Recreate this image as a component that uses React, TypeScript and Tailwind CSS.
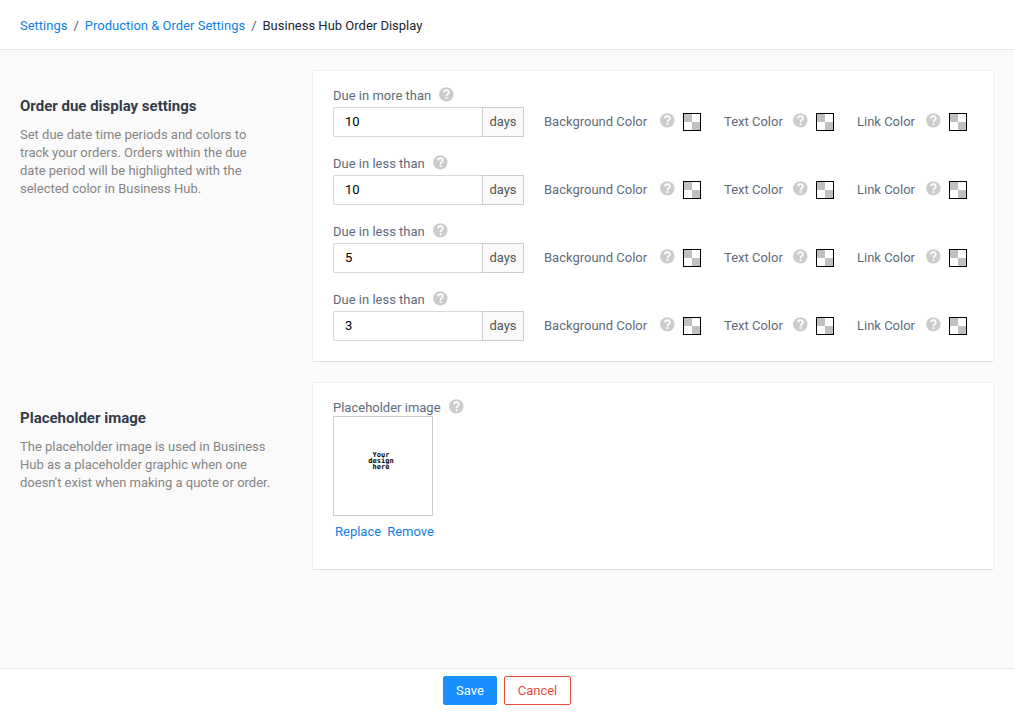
import { useState } from "react";
import type { ReactNode } from "react";

const dueRows = [
  { id: "more", label: "Due in more than", days: "10" },
  { id: "less-first", label: "Due in less than", days: "10" },
  { id: "less-second", label: "Due in less than", days: "5" },
  { id: "less-third", label: "Due in less than", days: "3" },
];

const colorFields = [
  { key: "background", label: "Background Color", width: "w-[108px]" },
  { key: "text", label: "Text Color", width: "w-[61px]" },
  { key: "link", label: "Link Color", width: "w-[61px]" },
];

function HelpIcon() {
  return (
    <svg viewBox="0 0 15 15" aria-hidden="true" className="mb-[3px] size-[15px] shrink-0">
      <circle cx="7.3" cy="7.4" r="7.2" fill="#cccccc" />
      <path
        d="M5 5.6C5 4.1 6 3.2 7.4 3.2S9.8 4.1 9.8 5.4C9.8 7 7.5 7.2 7.5 9.2"
        fill="none"
        stroke="#ffffff"
        strokeWidth="1.7"
      />
      <rect x="6.6" y="10.2" width="1.8" height="1.8" fill="#ffffff" />
    </svg>
  );
}

function ColorField({ id, label, width }: { id: string; label: string; width: string }) {
  return (
    <div className="flex items-center gap-2">
      <label htmlFor={id} className={`${width} whitespace-nowrap text-[#5f6b7a]`}>
        {label}
      </label>
      <HelpIcon />
      <button
        id={id}
        type="button"
        className="grid size-[18px] shrink-0 cursor-pointer grid-cols-2 grid-rows-2 border border-black bg-white"
      >
        <span className="bg-[#bfbfbf]" />
        <span />
        <span />
        <span className="bg-[#bfbfbf]" />
      </button>
    </div>
  );
}

function DueRow({ id, label, days }: { id: string; label: string; days: string }) {
  const [value, setValue] = useState(days);
  return (
    <div className="flex flex-col gap-[3px]">
      <div className="flex h-[17px] items-center gap-2">
        <label htmlFor={id} className="text-[#5f6b7a]">
          {label}
        </label>
        <HelpIcon />
      </div>
      <div className="flex items-center gap-5">
        <div className="flex h-[30px] w-[191px] shrink-0">
          <input
            id={id}
            type="text"
            value={value}
            onChange={(e) => setValue(e.target.value)}
            className="min-w-0 flex-1 rounded-l-xs border border-r-0 border-[#d9d9d9] bg-white px-[11px] text-black outline-none"
          />
          <span className="flex w-[42px] items-center justify-center border border-[#cccccc] bg-[#fafafa] text-[#555555]">
            days
          </span>
        </div>
        <div className="flex items-center gap-[23px]">
          {colorFields.map((field) => (
            <ColorField key={field.key} id={`${id}-${field.key}`} label={field.label} width={field.width} />
          ))}
        </div>
      </div>
    </div>
  );
}

function Section({
  title,
  description,
  children,
}: {
  title: string;
  description: string;
  children: ReactNode;
}) {
  return (
    <section className="flex">
      <div className="w-[292px] shrink-0 pt-[26px] pr-[37px]">
        <h2 className="text-[15px] leading-5 font-bold text-[#343c4b]">{title}</h2>
        <p className="mt-[10px] leading-[18px] text-[#858585]">{description}</p>
      </div>
      <div className="min-w-0 flex-1 rounded-xs border border-[#f0f0f0] border-b-[#e2e2e2] bg-white px-5 pt-4 pb-5">
        {children}
      </div>
    </section>
  );
}

export default function App() {
  return (
    <div className="flex min-h-screen flex-col bg-[#fafafa] font-['Roboto',sans-serif] text-[13px] leading-[18px]">
      <header className="border-b border-[#e8e8e8] bg-white px-5 pt-[17px] pb-[14px]">
        <nav aria-label="Breadcrumb" className="flex gap-[6px]">
          <a href="#settings" className="text-[#1080e0]">
            Settings
          </a>
          <span className="text-[#555555]">/</span>
          <a href="#production" className="text-[#1080e0]">
            Production &amp; Order Settings
          </a>
          <span className="text-[#555555]">/</span>
          <span className="text-[#22262e]">Business Hub Order Display</span>
        </nav>
      </header>

      <main className="flex flex-1 flex-col gap-5 px-5 py-5">
        <Section
          title="Order due display settings"
          description="Set due date time periods and colors to track your orders. Orders within the due date period will be highlighted with the selected color in Business Hub."
        >
          <div className="flex flex-col gap-[18px]">
            {dueRows.map((row) => (
              <DueRow key={row.id} {...row} />
            ))}
          </div>
        </Section>

        <Section
          title="Placeholder image"
          description="The placeholder image is used in Business Hub as a placeholder graphic when one doesn't exist when making a quote or order."
        >
          <div className="flex h-[17px] items-center gap-2">
            <span className="text-[#5f6b7a]">Placeholder image</span>
            <HelpIcon />
          </div>
          <div className="flex size-[100px] items-center justify-center border border-[#cccccc] bg-white pr-1 pb-[10px]">
            <p className="text-center font-['DejaVu_Sans_Mono',monospace] text-[7px] leading-[6px] font-bold text-black">
              Your
              <br />
              design
              <br />
              here
            </p>
          </div>
          <div className="flex gap-[6px] px-[2px] pt-[7px] pb-2 text-[#1080e0]">
            <button type="button" className="cursor-pointer">
              Replace
            </button>
            <button type="button" className="cursor-pointer">
              Remove
            </button>
          </div>
        </Section>
      </main>

      <footer className="flex justify-center gap-[7px] border-t border-[#e8e8e8] bg-white pt-[7px] pb-[13px]">
        <button
          type="button"
          className="h-[29px] min-w-[54px] cursor-pointer rounded-xs border border-[#1890ff] bg-[#1890ff] px-3 text-white"
        >
          Save
        </button>
        <button
          type="button"
          className="h-[29px] min-w-[67px] cursor-pointer rounded-xs border border-[#e74c3c] bg-white px-3 text-[#e74c3c]"
        >
          Cancel
        </button>
      </footer>
    </div>
  );
}
